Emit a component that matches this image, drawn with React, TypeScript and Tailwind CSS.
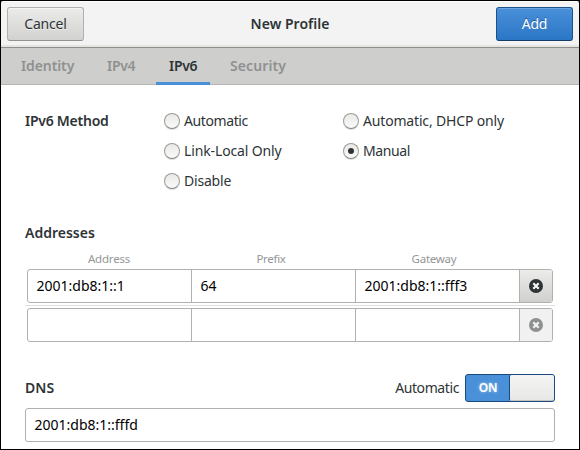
import React from "react";

const base = "font-['Noto_Sans','Open_Sans',sans-serif]";

function Tab({ label, box, text, active }: { label: string; box: string; text: string; active?: boolean }) {
  return (
    <button
      className={`flex h-[37px] items-center whitespace-nowrap border-b-[3px] font-semibold ${box} ${
        active ? "border-[#4a90d9] text-[#2e3436]" : "border-transparent text-[#8f9191]"
      }`}
    >
      <span className={`relative top-px ${text}`}>{label}</span>
    </button>
  );
}

function Radio({ label, checked, text }: { label: string; checked?: boolean; text: string }) {
  return (
    <label className="flex h-[30px] items-center gap-1">
      <span className="flex size-4 shrink-0 items-center justify-center rounded-full border border-[#9b9b96] border-b-[#858581] bg-linear-to-b from-[#e9e9e7] to-[#fafafa] shadow-[0_1px_0_#dededc]">
        {checked && <span className="size-1.5 rounded-full bg-[#2e3436]" />}
      </span>
      <span className={`whitespace-nowrap ${text}`}>{label}</span>
    </label>
  );
}

function ClearIcon() {
  return (
    <svg width="14" height="14" viewBox="0 0 14 14">
      <circle cx="7" cy="7" r="7" fill="currentColor" />
      <path d="M4.3 4.3 9.7 9.7M9.7 4.3 4.3 9.7" stroke="#f4f4f3" strokeWidth="2.2" />
    </svg>
  );
}

function AddressRow({ values, enabled }: { values: string[]; enabled?: boolean }) {
  return (
    <div className="mx-0.5 flex h-[34px] overflow-hidden rounded-[3px] border border-[#b0b0ac]">
      {values.map((v, i) => (
        <div key={i} className="flex w-[164px] shrink-0 items-center border-r border-[#b0b0ac] pl-[8.5px] text-black">
          <span className="whitespace-nowrap">{v}</span>
        </div>
      ))}
      <button
        className={`flex grow items-center justify-center ${
          enabled ? "bg-linear-to-b from-[#ececeb] to-[#d0d0ce] text-[#2e3436]" : "bg-[#f1f1f1] text-[#8f9191]"
        }`}
      >
        <ClearIcon />
      </button>
    </div>
  );
}

export default function App() {
  return (
    <div className={`h-[450px] w-[580px] overflow-hidden border border-black bg-[#858585] text-[14px] leading-5 text-[#2e3436] ${base}`}>
      <div className="flex h-full flex-col overflow-hidden rounded-t-[4px] bg-white">
        <header className="flex h-[47px] shrink-0 items-start justify-between border-b border-[#8e8f8d] bg-[#f3f3f3] px-1.5 pt-1.5 shadow-[inset_0_1px_0_#fff,inset_0_-2px_0_#e4e4e1]">
          <button className="flex h-[34px] w-[77px] items-center justify-center rounded-[3px] border border-[#b0b0ac] border-b-[#92928e] bg-linear-to-b from-[#ebebea] to-[#d2d2d0] shadow-[inset_0_1px_0_#f4f4f4] [text-shadow:0_1px_#f0f0ef]">
            <span className="tracking-[-0.2px]">Cancel</span>
          </button>
          <h1 className="pt-[7px] font-semibold tracking-[0.02px]">New Profile</h1>
          <button className="flex h-[34px] w-[77px] items-center justify-center rounded-[3px] border border-[#1c5187] border-b-[#123d6b] bg-linear-to-b from-[#4a90d9] to-[#2a76c6] text-white shadow-[inset_0_1px_0_#6ba6e2] [text-shadow:0_-1px_#1b5a9c]">
            <span className="tracking-[-0.3px]">Add</span>
          </button>
        </header>
        <nav className="flex h-[37px] shrink-0 bg-[#cececc] shadow-[inset_0_-1px_0_#b4b4b2]">
          <Tab label="Identity" box="w-[86px] pl-5" text="tracking-[-0.1px]" />
          <Tab label="IPv4" box="w-[69px] pl-5" text="tracking-[-0.3px]" />
          <Tab label="IPv6" box="w-[54px] pl-[13px]" text="tracking-[-0.3px]" active />
          <Tab label="Security" box="w-[80px] pl-5" text="tracking-[0.1px]" />
        </nav>
        <main className="flex grow flex-col px-6">
          <section className="flex h-[138px] shrink-0 pt-[21px]">
            <h2 className="w-[139px] pt-[5px] font-semibold tracking-[-0.25px]">IPv6 Method</h2>
            <div className="w-[179px]">
              <Radio label="Automatic" text="tracking-[-0.4px]" />
              <Radio label="Link-Local Only" text="tracking-[-0.13px]" />
              <Radio label="Disable" text="tracking-[-0.2px]" />
            </div>
            <div>
              <Radio label="Automatic, DHCP only" text="tracking-[-0.17px]" />
              <Radio label="Manual" text="tracking-[-0.4px]" checked />
            </div>
          </section>
          <section className="flex h-[151px] shrink-0 flex-col">
            <h2 className="h-[26px] shrink-0 font-semibold">Addresses</h2>
            <div className="flex h-5 shrink-0 pl-0.5 text-center text-[11.5px] leading-5 text-[#949696]">
              <span className="w-[164px] tracking-[-0.2px]">Address</span>
              <span className="w-[160px] tracking-[-0.3px]">Prefix</span>
              <span className="w-[166px] tracking-[-0.25px]">Gateway</span>
            </div>
            <AddressRow values={["2001:db8:1::1", "64", "2001:db8:1::fff3"]} enabled />
            <div className="my-0.5 h-px shrink-0 bg-[#e0e0de]" />
            <AddressRow values={["", "", ""]} />
          </section>
          <section>
            <div className="flex h-[34px] items-start">
              <h2 className="grow pt-1 font-semibold tracking-[0.1px]">DNS</h2>
              <span className="mr-1.5 pt-1 tracking-[-0.4px]">Automatic</span>
              <div className="flex h-7 w-[90px] rounded-[3px] border border-[#184a80] bg-[#4a90d9]">
                <span className="grow pl-px text-center text-[12px] leading-[25px] font-semibold tracking-[-0.3px] text-white [text-shadow:0_0_3px_rgba(255,255,255,0.6)]">
                  ON
                </span>
                <span className="h-[26px] w-[45px] rounded-[2px] border-b border-l border-b-[#c4c4c0] border-l-[#184a80] bg-linear-to-b from-[#f4f4f3] to-[#e8e8e6]" />
              </div>
            </div>
            <div className="flex h-[34px] items-center rounded-[3px] border border-[#b0b0ac] pl-[8.5px] text-black">
              <span>2001:db8:1::fffd</span>
            </div>
          </section>
        </main>
      </div>
    </div>
  );
}
